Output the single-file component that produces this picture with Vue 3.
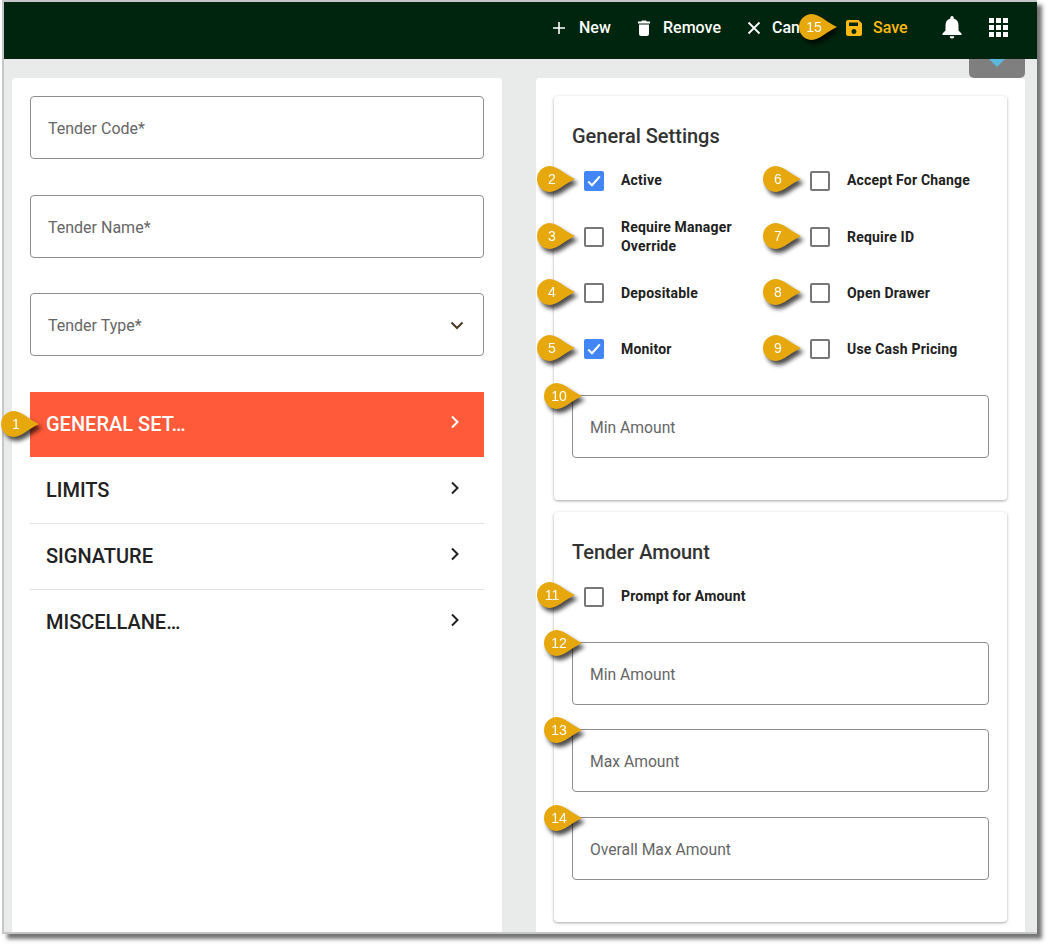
<template>
  <div class="page">
    <div class="frame">
      <header class="topbar">
        <button class="action">
          <svg width="14" height="14" viewBox="0 0 14 14"><path d="M7 1v12M1 7h12" stroke="#fff" stroke-width="1.6" fill="none" /></svg>
          <span>New</span>
        </button>
        <button class="action">
          <svg width="14" height="18" viewBox="0 0 14 18"><path d="M1 2.5h3.2L5 1.5h4l.8 1H13v2H1zM2 5.5h10V15a2 2 0 0 1-2 2H4a2 2 0 0 1-2-2z" fill="#fff" /></svg>
          <span>Remove</span>
        </button>
        <button class="action">
          <svg width="14" height="14" viewBox="0 0 14 14"><path d="M1.500 1.500l11 11M12.500 1.500l-11 11" stroke="#fff" stroke-width="1.8" fill="none" /></svg>
          <span>Cancel</span>
        </button>
        <button class="action save">
          <svg width="16" height="16" viewBox="0 0 16 16"><path fill-rule="evenodd" d="M2 0h10.500L16 3.500V14a2 2 0 0 1-2 2H2a2 2 0 0 1-2-2V2a2 2 0 0 1 2-2zm1 2.500V6h9V2.500zM8 9a2.500 2.500 0 1 0 0 5 2.500 2.500 0 0 0 0-5z" fill="#fdb913" /></svg>
          <span>Save</span>
        </button>
        <svg class="bell" width="20" height="23" viewBox="0 0 20 23"><path d="M10 0a1.700 1.700 0 0 1 1.700 1.700v.7C15 3.200 16.500 6 16.500 9.300v5.200L19.500 17.500v1.500H.5v-1.500L3.500 14.500V9.300C3.500 6 5 3.200 8.300 2.400v-.7A1.700 1.700 0 0 1 10 0zM7.700 20.200h4.600A2.300 2.300 0 0 1 10 22.600a2.300 2.300 0 0 1-2.300-2.400z" fill="#fff" /></svg>
        <div class="apps">
          <i v-for="n in 9" :key="n"></i>
        </div>
        <div class="marker header-marker">
          <svg width="39" height="26" viewBox="0 0 39 26"><path :d="markerPath" fill="#e6a80c" /></svg>
          <span>15</span>
        </div>
      </header>

      <div class="tab"><i></i></div>

      <main class="content">
        <section class="card left">
          <div class="fields">
            <div v-for="f in mainFields" :key="f" class="field">
              <span>{{ f }}</span>
              <svg v-if="f === 'Tender Type*'" width="14" height="9" viewBox="0 0 14 9"><path d="M1.500 1.500L7 7l5.500-5.500" stroke="#4a3a22" stroke-width="2" fill="none" /></svg>
            </div>
          </div>
          <ul class="menu">
            <li v-for="(m, i) in menu" :key="m" class="menu-item" :class="{ active: i === 0 }">
              <span>{{ m }}</span>
              <svg width="10" height="14" viewBox="0 0 10 14"><path d="M2 1.500L7.500 7 2 12.500" stroke="currentColor" stroke-width="2" fill="none" /></svg>
              <div v-if="i === 0" class="marker menu-marker">
                <svg width="39" height="26" viewBox="0 0 39 26"><path :d="markerPath" fill="#e6a80c" /></svg>
                <span>1</span>
              </div>
            </li>
          </ul>
        </section>

        <section class="card right">
          <div class="panel general">
            <h2>General Settings</h2>
            <div class="checks">
              <div v-for="c in generalChecks" :key="c.label" class="check">
                <div class="box" :class="{ on: c.on }">
                  <svg v-if="c.on" width="14" height="12" viewBox="0 0 14 12"><path d="M1.200 6.500L5 10.200 12.800 1.500" stroke="#fff" stroke-width="2" fill="none" /></svg>
                  <div class="marker check-marker">
                    <svg width="39" height="26" viewBox="0 0 39 26"><path :d="markerPath" fill="#e6a80c" /></svg>
                    <span>{{ c.n }}</span>
                  </div>
                </div>
                <label>{{ c.label }}</label>
              </div>
            </div>
            <div class="field small">
              <span>Min Amount</span>
              <div class="marker field-marker">
                <svg width="39" height="26" viewBox="0 0 39 26"><path :d="markerPath" fill="#e6a80c" /></svg>
                <span>10</span>
              </div>
            </div>
          </div>

          <div class="panel tender">
            <h2>Tender Amount</h2>
            <div class="check single">
              <div class="box">
                <div class="marker check-marker">
                  <svg width="39" height="26" viewBox="0 0 39 26"><path :d="markerPath" fill="#e6a80c" /></svg>
                  <span>11</span>
                </div>
              </div>
              <label>Prompt for Amount</label>
            </div>
            <div class="tender-fields">
              <div v-for="f in tenderFields" :key="f.n" class="field small">
                <span>{{ f.label }}</span>
                <div class="marker field-marker">
                  <svg width="39" height="26" viewBox="0 0 39 26"><path :d="markerPath" fill="#e6a80c" /></svg>
                  <span>{{ f.n }}</span>
                </div>
              </div>
            </div>
          </div>
        </section>
      </main>
    </div>
  </div>
</template>

<script setup>
const markerPath = 'M13 0C20 0 29 9 38 13C29 17 20 26 13 26A13 13 0 0 1 13 0Z'

const mainFields = ['Tender Code*', 'Tender Name*', 'Tender Type*']
const menu = ['GENERAL SET…', 'LIMITS', 'SIGNATURE', 'MISCELLANE…']

// 화면 기준 행 단위 순서
const generalChecks = [
  { n: 2, label: 'Active', on: true },
  { n: 6, label: 'Accept For Change' },
  { n: 3, label: 'Require Manager Override' },
  { n: 7, label: 'Require ID' },
  { n: 4, label: 'Depositable' },
  { n: 8, label: 'Open Drawer' },
  { n: 5, label: 'Monitor', on: true },
  { n: 9, label: 'Use Cash Pricing' }
]

const tenderFields = [
  { n: 12, label: 'Min Amount' },
  { n: 13, label: 'Max Amount' },
  { n: 14, label: 'Overall Max Amount' }
]
</script>

<style>
html, body {
  margin: 0;
  background: #fff;
}
</style>

<style scoped>
.page {
  width: 1055px;
  height: 949px;
  overflow: hidden;
}

.frame {
  position: relative;
  box-sizing: border-box;
  width: 1035px;
  height: 934px;
  margin-left: 2px;
  border: 2px solid #c6c6c6;
  border-right: 0;
  background: #e9ebea;
  box-shadow: 5px 5px 4px rgba(0, 0, 0, 0.55);
  font-family: Roboto, "Liberation Sans", sans-serif;
}

.topbar {
  position: relative;
  display: flex;
  align-items: center;
  box-sizing: border-box;
  height: 57px;
  padding: 0 0 6px 548px;
  background: #00250e;
}

.action {
  display: flex;
  align-items: center;
  padding: 0;
  border: 0;
  background: none;
  color: #fff;
  font: 500 16px Roboto, sans-serif;
}

.action svg {
  margin-right: 13px;
}

.action:nth-child(1) { width: 85px; }
.action:nth-child(2) { width: 110px; }
.action:nth-child(3) { width: 99px; }
.action:nth-child(4) { width: 87px; }

.action:nth-child(2) svg {
  margin-right: 12px;
}

.action:nth-child(3) svg {
  margin-right: 11px;
}

.action.save svg {
  margin-right: 11px;
}

.save {
  color: #fdb913;
}

.bell {
  margin-left: 9px;
}

.apps {
  display: grid;
  grid-template-columns: repeat(3, 5px);
  grid-auto-rows: 5px;
  gap: 2px;
  margin-left: 27px;
}

.apps i {
  background: #fff;
}

.tab {
  position: absolute;
  top: 57px;
  left: 965px;
  width: 56px;
  height: 19px;
  background: #7f7f7f;
  border-radius: 0 0 5px 5px;
}

.tab i {
  display: block;
  width: 0;
  margin: 0 auto;
  border-left: 8px solid transparent;
  border-right: 8px solid transparent;
  border-top: 8px solid #5bb8dc;
}

.content {
  display: flex;
  gap: 34px;
  height: 873px;
  padding: 19px 0 0 8px;
  box-sizing: border-box;
}

.card {
  box-sizing: border-box;
  height: 854px;
  background: #fff;
  border-radius: 4px 4px 0 0;
  padding: 18px;
}

.left {
  width: 490px;
}

.right {
  width: 489px;
}

.fields {
  display: flex;
  flex-direction: column;
  gap: 35.5px;
}

.field {
  position: relative;
  display: flex;
  align-items: center;
  justify-content: space-between;
  box-sizing: border-box;
  height: 63px;
  padding: 2px 19px 0 17px;
  border: 1px solid #8e8e8e;
  border-radius: 4px;
  color: #666;
  font-size: 16px;
}

.field.small {
  font-size: 15.7px;
}

.menu {
  margin: 36px 0 0;
  padding: 0;
  list-style: none;
}

.menu-item {
  position: relative;
  display: flex;
  align-items: center;
  justify-content: space-between;
  box-sizing: border-box;
  height: 66px;
  padding: 0 24px 6px 16px;
  border-bottom: 1px solid #e2e2e2;
  color: #212121;
  font-size: 20px;
  font-weight: 500;
}

.menu-item:last-child {
  border-bottom: 0;
}

.menu-item.active {
  height: 65px;
  margin-bottom: 1px;
  background: #ff5a39;
  color: #fff;
  border-bottom: 0;
}

.menu-item > span {
  line-height: 1;
  padding-top: 4px;
}

.panel {
  box-sizing: border-box;
  padding: 18px;
  border-radius: 4px;
  box-shadow: 0 1px 3px rgba(0, 0, 0, 0.35);
}

.general {
  height: 404px;
}

.tender {
  height: 410px;
  margin-top: 12px;
}

h2 {
  margin: 10px 0 0;
  color: #333;
  font-size: 20px;
  font-weight: 500;
  line-height: 24px;
}

.checks {
  display: grid;
  grid-template-columns: 226px 191px;
  grid-auto-rows: 56px;
  margin-top: 5px;
}

.check {
  display: flex;
  align-items: center;
  padding-left: 12px;
}

.check label {
  width: 130px;
  margin-left: 17px;
  color: #212121;
  font: 700 14px/19px Roboto, sans-serif;
  letter-spacing: 0.2px;
}

.check:nth-child(-n+2) label {
  margin-top: -2px;
}

.single {
  height: 56px;
  margin-top: 5px;
}

.single label {
  width: auto;
  margin-top: -2px;
}

.box {
  position: relative;
  display: flex;
  align-items: center;
  justify-content: center;
  flex: none;
  box-sizing: border-box;
  width: 20px;
  height: 20px;
  border: 2px solid #777;
  border-radius: 2px;
}

.box.on {
  background: #4285f4;
  border-color: #4285f4;
}

.general .field {
  margin-top: 18px;
}

.tender-fields {
  display: flex;
  flex-direction: column;
  gap: 24.3px;
  margin-top: 17px;
}

.marker {
  position: absolute;
  width: 39px;
  height: 26px;
  filter: drop-shadow(3px 4px 2px rgba(0, 0, 0, 0.7));
  color: #fff;
  font: 400 14px/26px "Liberation Sans", Arial, sans-serif;
}

.marker svg {
  display: block;
  margin: 0;
}

.marker span {
  position: absolute;
  top: 0;
  left: 0;
  width: 30px;
  text-align: center;
}

.header-marker {
  top: 12px;
  left: 795px;
}

.menu-marker {
  left: -29px;
  top: 19px;
}

.check-marker {
  left: -49px;
  top: -6px;
}

.check:nth-child(-n+2) .check-marker {
  top: -7px;
}

.field-marker {
  left: -29px;
  top: -13px;
}
</style>
